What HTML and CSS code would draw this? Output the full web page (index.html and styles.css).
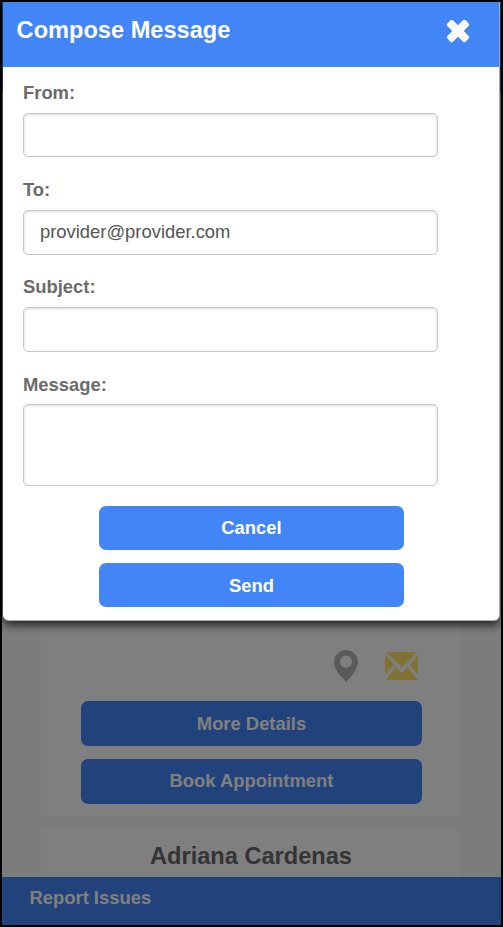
FILE: index.html
```html
<!DOCTYPE html>
<html lang="en">
<head>
<meta charset="utf-8">
<title>Compose Message</title>
<link rel="stylesheet" href="styles.css">
</head>
<body>
<div class="app">
  <header class="topbar"></header>
  <main class="results">
    <section class="card provider">
      <div class="icons">
        <svg class="pin" width="24" height="32" viewBox="0 0 24 32"><path fill-rule="evenodd" d="M12 0C5.4 0 0 5.3 0 12c0 3.300 1.400 6.300 3 9 2.400 4 6 8 9 11 3-3 6.600-7 9-11 1.600-2.700 3-5.700 3-9C24 5.300 18.600 0 12 0zM12 5.700a6.100 6.100 0 1 1 0 12.200 6.100 6.100 0 0 1 0-12.200z"/></svg>
        <svg class="mail" width="33" height="28" viewBox="0 0 33 28"><path d="M.8 0H32.500L17 15ZM0 2.500L9.300 12.700L0 22.500ZM33 3.500V22.500L24.500 13.300ZM11 14.500L17 21.500L22.700 15.200L32.800 28H.7Z"/></svg>
      </div>
      <button class="btn">More Details</button>
      <button class="btn">Book Appointment</button>
    </section>
    <section class="card next"><h2>Adriana Cardenas</h2></section>
  </main>
  <footer class="footer">Report Issues</footer>
  <div class="backdrop">
    <form class="modal">
      <div class="modal-head">
        <h1>Compose Message</h1>
        <svg width="24" height="24" viewBox="0 0 24 24"><g transform="rotate(45 12 12)"><rect x="-.9" y="8" width="25.800" height="8" rx="1.800"/><rect x="8" y="-.9" width="8" height="25.800" rx="1.800"/></g></svg>
      </div>
      <div class="modal-body">
        <label for="from">From:</label>
        <input id="from" type="text">
        <label for="to">To:</label>
        <input id="to" type="text" value="provider@provider.com">
        <label for="subject">Subject:</label>
        <input id="subject" type="text">
        <label for="message">Message:</label>
        <textarea id="message"></textarea>
        <div class="actions">
          <button type="button" class="btn">Cancel</button>
          <button type="button" class="btn">Send</button>
        </div>
      </div>
    </form>
  </div>
</div>
</body>
</html>
```
FILE: styles.css
```css
* { box-sizing: border-box; }
body {
  margin: 0;
  background: #000;
  font-family: "Liberation Sans", Arial, sans-serif;
  font-size: 18.4px;
}
.app {
  position: relative;
  display: flex;
  flex-direction: column;
  width: 499px;
  height: 923px;
  margin: 2px;
  overflow: hidden;
  background: #f8f8f8;
}
.topbar { flex: none; height: 90px; background: #4285f6; }
.results { flex: 1; min-height: 0; padding: 0 40px 0 39px; overflow: hidden; }
.card { background: #fff; }
.provider {
  display: flex;
  flex-direction: column;
  justify-content: flex-end;
  gap: 13px;
  height: 725px;
  padding: 0 39px 13.500px 40px;
}
.icons { display: flex; align-items: center; justify-content: flex-end; gap: 27px; padding-right: 4px; margin-bottom: 6.200px; }
.pin { fill: #b4b4b8; }
.mail { fill: #fee464; }
.next { margin-top: 13px; height: 80px; padding-top: 12px; }
h1, h2 { margin: 0; font-size: 23.600px; line-height: 28px; font-weight: bold; }
h2 { color: #686868; text-align: center; }
.btn {
  display: block;
  width: 100%;
  height: 44.600px;
  padding: 0;
  border: 0;
  border-radius: 7px;
  background: #4285f6;
  color: #fff;
  font: bold 18.400px "Liberation Sans", Arial, sans-serif;
}
.footer {
  flex: none;
  height: 48px;
  padding: 10px 27.500px;
  background: #4285f6;
  color: #fff;
  font-weight: bold;
  line-height: 22px;
}
.backdrop { position: absolute; inset: 0; background: rgba(0, 0, 0, .5); }
.modal {
  width: 497px;
  height: 619px;
  margin-left: 1px;
  border: solid #aaa;
  border-width: 0 1px 1px 0;
  border-radius: 0 0 6px 6px;
  background: #fff;
  box-shadow: 0 4px 10px rgba(0, 0, 0, .75);
}
.modal-head {
  display: flex;
  align-items: flex-start;
  justify-content: space-between;
  height: 65px;
  padding: 14px 29px 0 13.600px;
  background: #4285f6;
  color: #fff;
}
.modal-head svg { margin-top: 3.400px; fill: #fff; }
.modal-body { padding: 15px 61px 0 20px; }
label { display: block; height: 22px; margin-bottom: 9px; color: #6b6b6b; font-weight: bold; line-height: 22px; }
label[for="message"] { margin-bottom: 8px; }
input, textarea {
  display: block;
  width: 415px;
  height: 44.400px;
  margin: 0 0 21.800px;
  padding: 0 16px;
  border: 1px solid #c8c8c8;
  border-radius: 5px;
  background: #fff;
  box-shadow: inset 0 1px 3px rgba(0, 0, 0, .15);
  color: #555;
  font: 18.400px "Liberation Sans", Arial, sans-serif;
  outline: 0;
}
textarea { height: 82px; margin-bottom: 20px; resize: none; }
.actions { display: grid; gap: 13.400px; width: 305px; margin-left: 76px; }
.actions .btn { height: 44.200px; }
.actions .btn:last-child { padding-top: 1px; }
```
